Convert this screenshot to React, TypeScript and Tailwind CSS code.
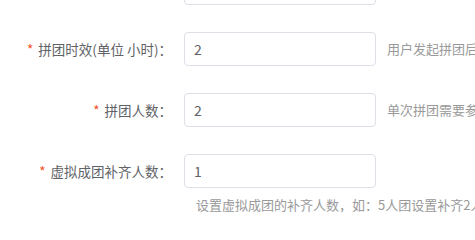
const font = { fontFamily: '"Noto Sans CJK SC", "Noto Sans", sans-serif' };

type Row = { label: string; value: string; tip?: string };

const rows: Row[] = [
  { label: "拼团价格", value: "" },
  { label: "拼团时效(单位 小时)", value: "2", tip: "用户发起拼团后开始计时，需在设置时间内邀请到规定好友人数参团" },
  { label: "拼团人数", value: "2", tip: "单次拼团需要参与的用户数" },
  { label: "虚拟成团补齐人数", value: "1" },
];

function FormRow({ row }: { row: Row }) {
  return (
    <div className="flex items-center h-[34px] mb-[27px]">
      <div className="w-[184px] shrink-0 pr-[12px] text-right text-[13.5px] text-[#606266] whitespace-nowrap">
        <span className="text-[#f24e1e] mr-[5px]">*</span>
        {row.label}：
      </div>
      <div className="w-[192px] h-[34px] shrink-0 border border-[#dcdfe6] rounded-[4px] flex items-center px-[9px] text-[14px] text-[#606266]">
        {row.value}
      </div>
      {row.tip && (
        <div className="ml-[11px] text-[13px] text-[#999999] whitespace-nowrap">{row.tip}</div>
      )}
    </div>
  );
}

export default function App() {
  return (
    <div className="w-[475px] h-[229px] bg-white overflow-hidden" style={font}>
      <div className="-mt-[29px]">
        {rows.map((r) => (
          <FormRow key={r.label} row={r} />
        ))}
      </div>
      <div className="-mt-[20px] pl-[196px] text-[13px] text-[#999999] whitespace-nowrap">
        设置虚拟成团的补齐人数，如：5人团设置补齐2人，则只需3人参团即可成团
      </div>
    </div>
  );
}
